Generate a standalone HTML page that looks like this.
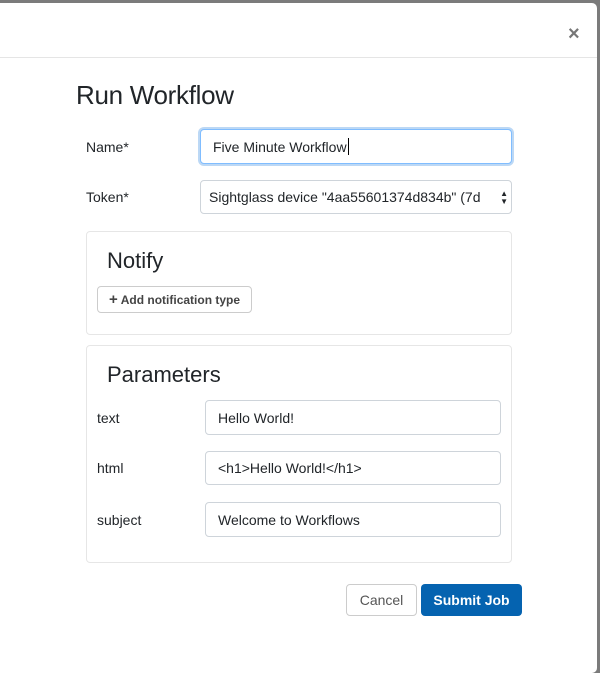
<!DOCTYPE html>
<html><head><style>
*{box-sizing:border-box;margin:0;padding:0}
html,body{width:600px;height:656px}
body{background:#7b7b7b;font-family:"Liberation Sans",sans-serif;color:#212529;position:relative;overflow:hidden}
.modal{position:absolute;left:0;top:3px;width:597px;height:670px;background:#fff;border-radius:0 5px 5px 0}
.hdr{height:55px;border-bottom:1px solid #e5e5e5;position:relative}
.x{position:absolute;left:568px;top:20px;font-size:20px;font-weight:bold;color:#777}
h1{position:absolute;left:76px;top:80px;font-size:26px;font-weight:normal;color:#212529;letter-spacing:-0.3px}
.lbl{position:absolute;font-size:14px;color:#212529}
.inp{position:absolute;border:1px solid #ced4da;border-radius:4px;font-size:14px;padding:0 12px;display:flex;align-items:center;background:#fff;white-space:nowrap;overflow:hidden}
.card{position:absolute;border:1px solid #e6e6e6;border-radius:4px}
.h3{position:absolute;font-size:22px}
.btn{position:absolute;border-radius:4px;font-size:14px;display:flex;align-items:center;justify-content:center}
</style></head><body>
<div class="modal">
<div class="hdr"><div class="x">×</div></div>
</div>
<h1>Run Workflow</h1>
<div class="lbl" style="left:86px;top:139px">Name*</div>
<div class="inp" style="left:200px;top:129px;width:312px;height:35px;border-color:#80bdff;box-shadow:0 0 0 2px #bcd8f5">Five Minute Workflow<span style="border-left:1px solid #000;height:17px;margin-left:1px"></span></div>
<div class="lbl" style="left:86px;top:189px">Token*</div>
<div class="inp" style="left:200px;top:180px;width:312px;height:34px;padding-left:8px">Sightglass device "4aa55601374d834b" (7d<span style="position:absolute;right:3px;top:9px;font-size:8px;line-height:8px;background:#fff;padding-left:2px">▲<br>▼</span></div>
<div class="card" style="left:86px;top:231px;width:426px;height:104px"></div>
<div class="h3" style="left:107px;top:248px">Notify</div>
<div class="btn" style="left:97px;top:286px;width:155px;height:27px;border:1px solid #ccc;color:#444;font-size:12px;font-weight:bold"><span style="font-size:15px;margin-right:3px">+</span>Add notification type</div>
<div class="card" style="left:86px;top:345px;width:426px;height:218px"></div>
<div class="h3" style="left:107px;top:362px">Parameters</div>
<div class="lbl" style="left:97px;top:410px">text</div>
<div class="inp" style="left:205px;top:400px;width:296px;height:35px">Hello World!</div>
<div class="lbl" style="left:97px;top:460px">html</div>
<div class="inp" style="left:205px;top:451px;width:296px;height:34px">&lt;h1&gt;Hello World!&lt;/h1&gt;</div>
<div class="lbl" style="left:97px;top:512px">subject</div>
<div class="inp" style="left:205px;top:502px;width:296px;height:35px">Welcome to Workflows</div>
<div class="btn" style="left:346px;top:584px;width:71px;height:32px;border:1px solid #ccc;color:#555">Cancel</div>
<div class="btn" style="left:421px;top:584px;width:101px;height:32px;background:#0563b0;color:#fff;font-weight:bold">Submit Job</div>
</body></html>
